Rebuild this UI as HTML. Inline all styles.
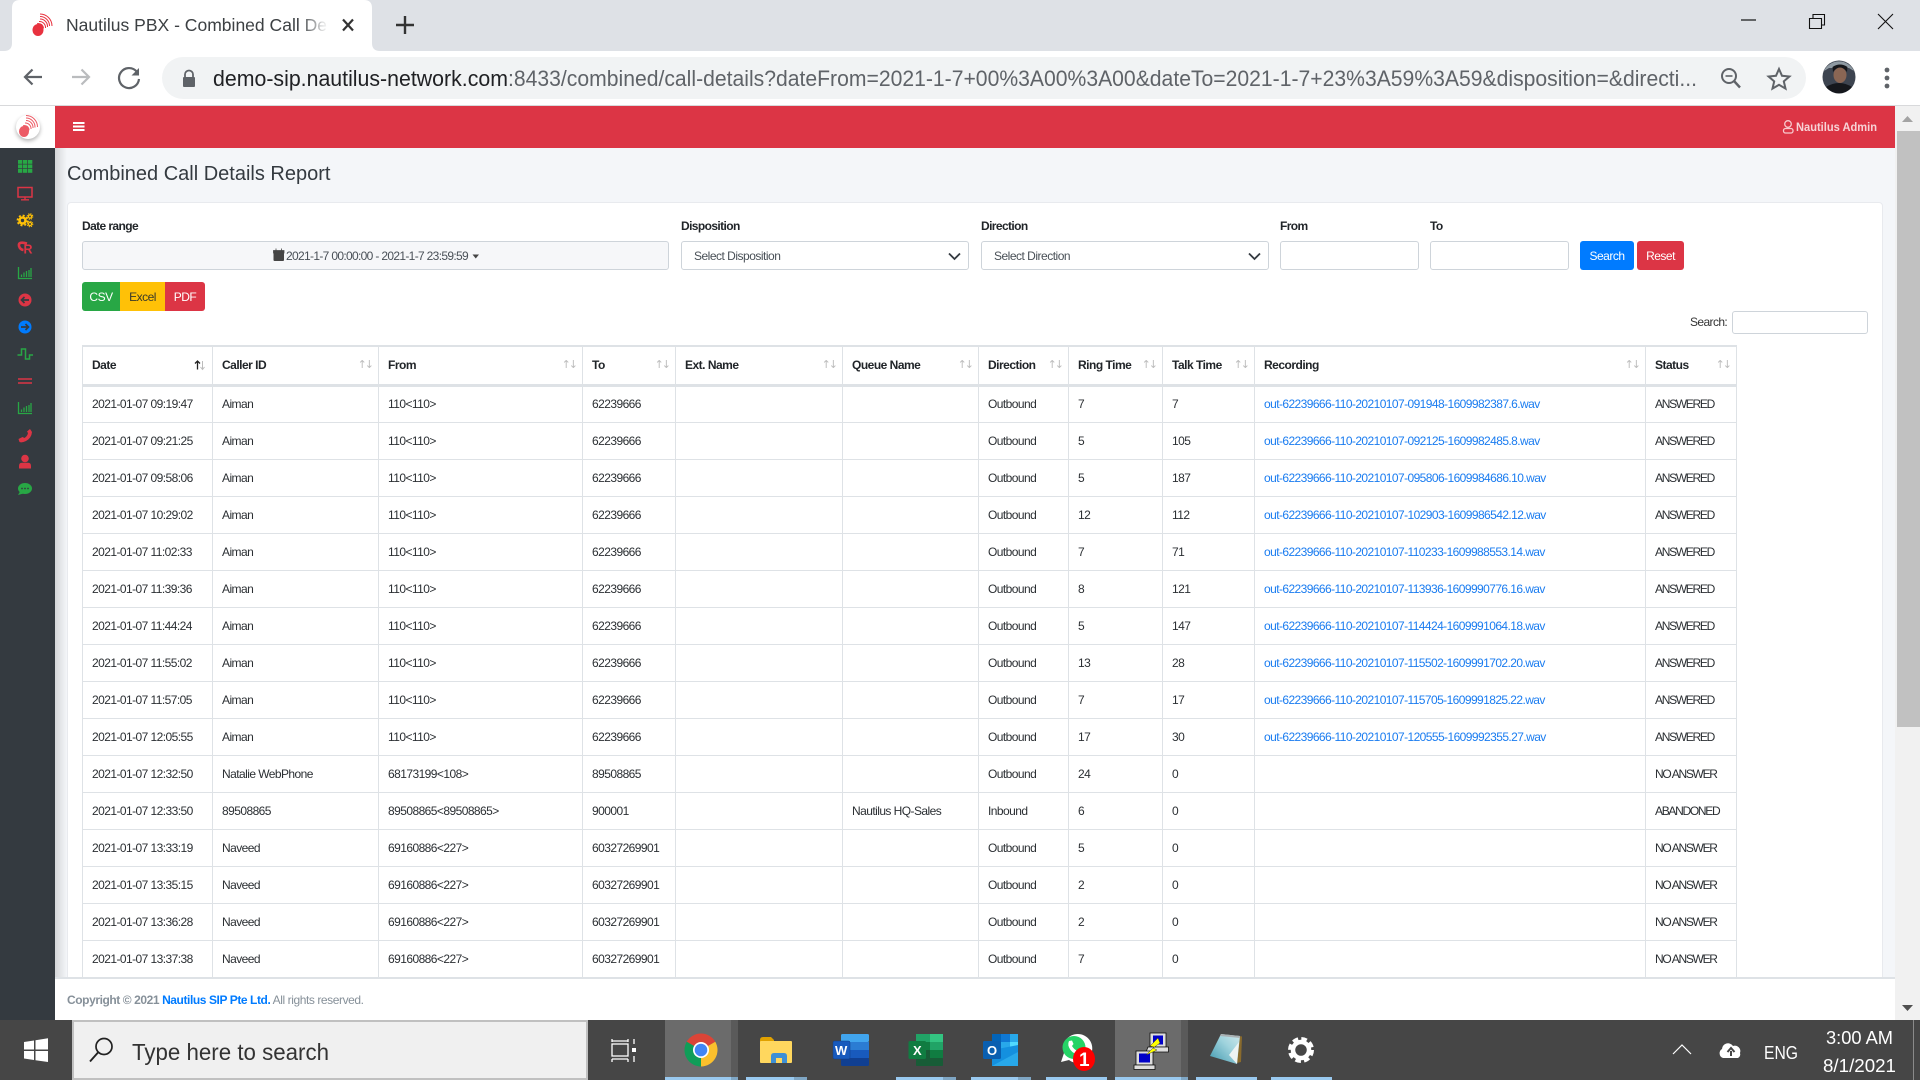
<!DOCTYPE html>
<html>
<head>
<meta charset="utf-8">
<title>Nautilus PBX - Combined Call Details Report</title>
<style>
html,body{margin:0;padding:0;width:1920px;height:1080px;overflow:hidden;background:#f4f6f9}
body{font-family:"Liberation Sans",sans-serif;color:#212529;font-size:12px;position:relative}
.a{position:absolute;box-sizing:border-box}
.lb{position:absolute;font-weight:bold;font-size:12px;letter-spacing:-.6px;line-height:16px;top:218px;color:#212529}
.inp{position:absolute;top:241px;height:29px;box-sizing:border-box;background:#fff;border:1px solid #ced4da;border-radius:3px;line-height:29px;font-size:12px;letter-spacing:-.5px;color:#495057;padding-left:12px}
.btn{position:absolute;color:#fff;text-align:center;font-size:12px;letter-spacing:-.5px;box-sizing:border-box}
table{position:absolute;left:82px;top:345px;width:1654px;border-collapse:collapse;table-layout:fixed;font-size:12px;letter-spacing:-.56px}
th,td{border:1px solid #dee2e6;padding:0 0 0 9px;text-align:left;white-space:nowrap;overflow:hidden;box-sizing:border-box}
th{height:39px;font-weight:bold;border-bottom:3px solid #dee2e6;border-top:2px solid #dee2e6;position:relative;letter-spacing:-.5px}
td{height:37px;color:#2b2f33}
td:last-child{letter-spacing:-1.3px}
th:after{content:"↑↓";position:absolute;right:6px;top:11px;color:#bcbcbc;font-size:11px;font-weight:normal;letter-spacing:-2px;font-family:"DejaVu Sans",sans-serif}
th.s:after{content:none}
td a{color:#1a7cf0;text-decoration:none;letter-spacing:-.58px}
svg text{font-family:"Liberation Sans",sans-serif}
</style>
</head>
<body>

<!-- content -->
<div class="a" style="left:67px;top:161px;font-size:20px;line-height:26px;color:#343a40;">Combined Call Details Report</div>
<div class="a" style="left:67px;top:202px;width:1816px;height:830px;background:#fff;border:1px solid #e8eaee;border-radius:4px"></div>

<div class="lb" style="left:82px">Date range</div>
<div class="lb" style="left:681px">Disposition</div>
<div class="lb" style="left:981px">Direction</div>
<div class="lb" style="left:1280px">From</div>
<div class="lb" style="left:1430px">To</div>

<div class="inp" style="left:82px;width:587px;background:#f6f7f9;padding:0;text-align:left"><span style="position:absolute;left:203px;white-space:nowrap;letter-spacing:-.67px">2021-1-7 00:00:00 - 2021-1-7 23:59:59</span></div>
<div class="inp" style="left:681px;width:288px">Select Disposition</div>
<div class="inp" style="left:981px;width:288px">Select Direction</div>
<div class="inp" style="left:1280px;width:139px"></div>
<div class="inp" style="left:1430px;width:139px"></div>

<div class="btn" style="left:1580px;top:241px;width:54px;height:29px;line-height:30px;background:#007bff;border-radius:3px">Search</div>
<div class="btn" style="left:1637px;top:241px;width:47px;height:29px;line-height:30px;background:#dc3545;border-radius:3px">Reset</div>

<div class="btn" style="left:82px;top:282px;width:38px;height:29px;line-height:30px;background:#28a745;border-radius:3px 0 0 3px">CSV</div>
<div class="btn" style="left:120px;top:282px;width:45px;height:29px;line-height:30px;background:#ffc107;color:#3a3a2a">Excel</div>
<div class="btn" style="left:165px;top:282px;width:40px;height:29px;line-height:30px;background:#dc3545;border-radius:0 3px 3px 0">PDF</div>

<div class="a" style="left:1690px;top:314px;font-size:12px;letter-spacing:-.6px;line-height:16px;color:#333">Search:</div>
<div class="inp" style="left:1732px;top:311px;width:136px;height:23px"></div>

<table>
<colgroup><col style="width:130px"><col style="width:166px"><col style="width:204px"><col style="width:93px"><col style="width:167px"><col style="width:136px"><col style="width:90px"><col style="width:94px"><col style="width:92px"><col style="width:391px"><col style="width:91px"></colgroup>
<thead><tr><th class="s">Date</th><th>Caller ID</th><th>From</th><th>To</th><th>Ext. Name</th><th>Queue Name</th><th>Direction</th><th>Ring Time</th><th>Talk Time</th><th>Recording</th><th>Status</th></tr></thead>
<tbody>
<tr><td>2021-01-07 09:19:47</td><td>Aiman</td><td>110&lt;110&gt;</td><td>62239666</td><td></td><td></td><td>Outbound</td><td>7</td><td>7</td><td><a>out-62239666-110-20210107-091948-1609982387.6.wav</a></td><td>ANSWERED</td></tr>
<tr><td>2021-01-07 09:21:25</td><td>Aiman</td><td>110&lt;110&gt;</td><td>62239666</td><td></td><td></td><td>Outbound</td><td>5</td><td>105</td><td><a>out-62239666-110-20210107-092125-1609982485.8.wav</a></td><td>ANSWERED</td></tr>
<tr><td>2021-01-07 09:58:06</td><td>Aiman</td><td>110&lt;110&gt;</td><td>62239666</td><td></td><td></td><td>Outbound</td><td>5</td><td>187</td><td><a>out-62239666-110-20210107-095806-1609984686.10.wav</a></td><td>ANSWERED</td></tr>
<tr><td>2021-01-07 10:29:02</td><td>Aiman</td><td>110&lt;110&gt;</td><td>62239666</td><td></td><td></td><td>Outbound</td><td>12</td><td>112</td><td><a>out-62239666-110-20210107-102903-1609986542.12.wav</a></td><td>ANSWERED</td></tr>
<tr><td>2021-01-07 11:02:33</td><td>Aiman</td><td>110&lt;110&gt;</td><td>62239666</td><td></td><td></td><td>Outbound</td><td>7</td><td>71</td><td><a>out-62239666-110-20210107-110233-1609988553.14.wav</a></td><td>ANSWERED</td></tr>
<tr><td>2021-01-07 11:39:36</td><td>Aiman</td><td>110&lt;110&gt;</td><td>62239666</td><td></td><td></td><td>Outbound</td><td>8</td><td>121</td><td><a>out-62239666-110-20210107-113936-1609990776.16.wav</a></td><td>ANSWERED</td></tr>
<tr><td>2021-01-07 11:44:24</td><td>Aiman</td><td>110&lt;110&gt;</td><td>62239666</td><td></td><td></td><td>Outbound</td><td>5</td><td>147</td><td><a>out-62239666-110-20210107-114424-1609991064.18.wav</a></td><td>ANSWERED</td></tr>
<tr><td>2021-01-07 11:55:02</td><td>Aiman</td><td>110&lt;110&gt;</td><td>62239666</td><td></td><td></td><td>Outbound</td><td>13</td><td>28</td><td><a>out-62239666-110-20210107-115502-1609991702.20.wav</a></td><td>ANSWERED</td></tr>
<tr><td>2021-01-07 11:57:05</td><td>Aiman</td><td>110&lt;110&gt;</td><td>62239666</td><td></td><td></td><td>Outbound</td><td>7</td><td>17</td><td><a>out-62239666-110-20210107-115705-1609991825.22.wav</a></td><td>ANSWERED</td></tr>
<tr><td>2021-01-07 12:05:55</td><td>Aiman</td><td>110&lt;110&gt;</td><td>62239666</td><td></td><td></td><td>Outbound</td><td>17</td><td>30</td><td><a>out-62239666-110-20210107-120555-1609992355.27.wav</a></td><td>ANSWERED</td></tr>
<tr><td>2021-01-07 12:32:50</td><td>Natalie WebPhone</td><td>68173199&lt;108&gt;</td><td>89508865</td><td></td><td></td><td>Outbound</td><td>24</td><td>0</td><td></td><td>NO ANSWER</td></tr>
<tr><td>2021-01-07 12:33:50</td><td>89508865</td><td>89508865&lt;89508865&gt;</td><td>900001</td><td></td><td>Nautilus HQ-Sales</td><td>Inbound</td><td>6</td><td>0</td><td></td><td>ABANDONED</td></tr>
<tr><td>2021-01-07 13:33:19</td><td>Naveed</td><td>69160886&lt;227&gt;</td><td>60327269901</td><td></td><td></td><td>Outbound</td><td>5</td><td>0</td><td></td><td>NO ANSWER</td></tr>
<tr><td>2021-01-07 13:35:15</td><td>Naveed</td><td>69160886&lt;227&gt;</td><td>60327269901</td><td></td><td></td><td>Outbound</td><td>2</td><td>0</td><td></td><td>NO ANSWER</td></tr>
<tr><td>2021-01-07 13:36:28</td><td>Naveed</td><td>69160886&lt;227&gt;</td><td>60327269901</td><td></td><td></td><td>Outbound</td><td>2</td><td>0</td><td></td><td>NO ANSWER</td></tr>
<tr><td>2021-01-07 13:37:38</td><td>Naveed</td><td>69160886&lt;227&gt;</td><td>60327269901</td><td></td><td></td><td>Outbound</td><td>7</td><td>0</td><td></td><td>NO ANSWER</td></tr>
</tbody>
</table>

<!-- footer -->
<div class="a" style="left:55px;top:977px;width:1840px;height:43px;background:#fff;border-top:2px solid #dee2e6"></div>
<div class="a" style="left:67px;top:992px;font-size:12px;line-height:16px;letter-spacing:-.42px;color:#869099;white-space:nowrap"><b>Copyright © 2021 <span style="color:#007bff">Nautilus SIP Pte Ltd.</span></b> All rights reserved.</div>

<!-- overlay -->
<svg class="a" style="left:0;top:0" width="1920" height="1080" viewBox="0 0 1920 1080" xmlns="http://www.w3.org/2000/svg">
<defs>
<linearGradient id="fade" x1="0" x2="1"><stop offset="0" stop-color="#fff" stop-opacity="0"/><stop offset="1" stop-color="#fff"/></linearGradient>
<linearGradient id="shd" x1="0" x2="1"><stop offset="0" stop-color="#000" stop-opacity=".13"/><stop offset="1" stop-color="#000" stop-opacity="0"/></linearGradient>
<linearGradient id="note" x1="0" y1="1" x2="1" y2="0"><stop offset="0" stop-color="#3f97ad"/><stop offset=".6" stop-color="#9fd3dd"/><stop offset="1" stop-color="#cfe8ec"/></linearGradient>
<filter id="bl" x="-50%" y="-50%" width="200%" height="200%"><feGaussianBlur stdDeviation="2"/></filter>
</defs>

<!-- browser chrome -->
<rect x="0" y="0" width="1920" height="51" fill="#dee1e6"/>
<path d="M0 51 H4 Q12 51 12 43 V8 Q12 0 20 0 H364 Q372 0 372 8 V43 Q372 51 380 51 H0Z" fill="#fff"/>
<rect x="0" y="51" width="1920" height="54" fill="#fff"/>
<rect x="0" y="105" width="1920" height="1" fill="#d8d9db"/>
<!-- favicon -->
<g>
<ellipse cx="38" cy="30" rx="5.500" ry="6" fill="#e8323f"/>
<path d="M37 23 Q43 22.500 44 28 L40 32Z" fill="#e8323f"/>
<g fill="none" stroke="#e8323f" stroke-width="1"><path d="M40 14 A12 12 0 0 1 52 26"/><path d="M40 16.500 A9.500 9.500 0 0 1 49.500 26"/><path d="M40 19 A7.500 7.500 0 0 1 47.500 27"/><path d="M39 21.500 A6 6 0 0 1 45.500 28"/></g>
</g>
<text x="66" y="31" font-size="17.6" fill="#3c4043" textLength="261" lengthAdjust="spacingAndGlyphs">Nautilus PBX - Combined Call De</text>
<rect x="300" y="8" width="28" height="34" fill="url(#fade)"/>
<path d="M343 19.500 L353 30.500 M353 19.500 L343 30.500" stroke="#333" stroke-width="2.200" fill="none"/>
<path d="M405 16 V34 M396 25 H414" stroke="#333" stroke-width="2.400" fill="none"/>
<!-- window controls -->
<path d="M1741 20 H1756" stroke="#111" stroke-width="1.200"/>
<path d="M1809.500 18.500 H1821.500 V28.500 H1809.500Z M1813 18 V14.500 H1824.500 V25 H1822" fill="none" stroke="#111" stroke-width="1.100"/>
<path d="M1878 14 L1893 29 M1893 14 L1878 29" stroke="#111" stroke-width="1.100"/>
<!-- nav -->
<path d="M42 77 H25 M32.500 69.500 L25 77 L32.500 84.500" fill="none" stroke="#5f6368" stroke-width="2.200"/>
<path d="M72 77 H89 M81.500 69.500 L89 77 L81.500 84.500" fill="none" stroke="#babcbe" stroke-width="2.200"/>
<path d="M137 72 A10 10 0 1 0 139 79" fill="none" stroke="#5f6368" stroke-width="2.200"/>
<path d="M139 68 V75.500 H131.500Z" fill="#5f6368"/>
<rect x="162" y="57" width="1644" height="42" rx="21" fill="#f1f3f4"/>
<path d="M185 77 V74.500 A4 4 0 0 1 193 74.500 V77" fill="none" stroke="#5f6368" stroke-width="1.800"/>
<rect x="183" y="77" width="12" height="10" rx="1" fill="#5f6368"/>
<text x="213" y="86" font-size="22" fill="#202124" textLength="295" lengthAdjust="spacingAndGlyphs">demo-sip.nautilus-network.com</text>
<text x="508" y="86" font-size="22" fill="#5f6368" textLength="1189" lengthAdjust="spacingAndGlyphs">:8433/combined/call-details?dateFrom=2021-1-7+00%3A00%3A00&amp;dateTo=2021-1-7+23%3A59%3A59&amp;disposition=&amp;directi...</text>
<circle cx="1729" cy="76" r="7" fill="none" stroke="#5f6368" stroke-width="2"/>
<path d="M1734 81 L1740 87.500" stroke="#5f6368" stroke-width="2.400"/><path d="M1725.500 76 H1732.500" stroke="#5f6368" stroke-width="1.600"/>
<path d="M1779 69 L1782 75.800 L1789.400 76.500 L1783.800 81.400 L1785.500 88.600 L1779 84.800 L1772.500 88.600 L1774.200 81.400 L1768.600 76.500 L1776 75.800Z" fill="none" stroke="#5f6368" stroke-width="2"/>
<!-- avatar -->
<circle cx="1839" cy="77" r="16.500" fill="#3d4450"/>
<path d="M1824 71 A16.500 16.500 0 0 1 1854 71 L1849 68 H1829Z" fill="#8f9aa2"/>
<ellipse cx="1840" cy="75" rx="6.500" ry="8" fill="#8a6654"/>
<path d="M1833 72 Q1840 63 1847 72 L1847.500 67 Q1840 62 1832.500 67Z" fill="#15161a"/>
<path d="M1826 87 Q1839 79 1852 87 A16.500 16.500 0 0 1 1826 87Z" fill="#15171c"/>
<circle cx="1887" cy="70" r="2.400" fill="#5f6368"/><circle cx="1887" cy="78" r="2.400" fill="#5f6368"/><circle cx="1887" cy="86" r="2.400" fill="#5f6368"/>

<!-- navbar -->
<rect x="55" y="106" width="1840" height="42" fill="#dc3545"/>
<rect x="0" y="106" width="55" height="42" fill="#fff"/>
<circle cx="28" cy="129" r="12" fill="#000" opacity=".3" filter="url(#bl)"/>
<circle cx="28" cy="127" r="12" fill="#fff"/>
<g opacity=".8">
<ellipse cx="24" cy="131.500" rx="5" ry="5.500" fill="#e8323f"/>
<path d="M23 125 Q29 124.500 29.500 130 L26 134Z" fill="#e8323f"/>
<g fill="none" stroke="#e8323f" stroke-width="1"><path d="M26 115.500 A11.500 11.500 0 0 1 37.500 127"/><path d="M26 118 A9 9 0 0 1 35 127.500"/><path d="M26 120.500 A7 7 0 0 1 33 128"/><path d="M25 123 A5.500 5.500 0 0 1 31 129"/></g>
</g>
<path d="M73 123 H84.500 M73 126.500 H84.500 M73 130 H84.500" stroke="#fff" stroke-width="2"/>
<g fill="none" stroke="#f7c9cd" stroke-width="1.300"><circle cx="1788" cy="124" r="3.300"/><rect x="1783.500" y="128.500" width="9.500" height="4.500" rx="2"/></g>
<text x="1796" y="131" font-size="12" font-weight="bold" fill="#f7d3d6" textLength="81" lengthAdjust="spacingAndGlyphs">Nautilus Admin</text>

<!-- sidebar -->
<rect x="0" y="148" width="55" height="872" fill="#343a40"/>
<rect x="55" y="148" width="12" height="829" fill="url(#shd)"/>
<!-- grid -->
<g fill="#28a745"><rect x="18" y="160" width="4.300" height="3.800"/><rect x="23" y="160" width="4.300" height="3.800"/><rect x="28" y="160" width="4.300" height="3.800"/><rect x="18" y="164.500" width="4.300" height="3.800"/><rect x="23" y="164.500" width="4.300" height="3.800"/><rect x="28" y="164.500" width="4.300" height="3.800"/><rect x="18" y="169" width="4.300" height="3.800"/><rect x="23" y="169" width="4.300" height="3.800"/><rect x="28" y="169" width="4.300" height="3.800"/></g>
<!-- desktop -->
<path d="M18 187.500 H32 V197 H18Z" fill="none" stroke="#dc3545" stroke-width="1.500"/><path d="M21 199.800 H29 M25 197 V199.800" stroke="#dc3545" stroke-width="1.400"/>
<!-- cogs -->
<g fill="none" stroke="#ffc107"><circle cx="22.500" cy="220.500" r="3" stroke-width="2.600"/><circle cx="22.500" cy="220.500" r="5" stroke-width="1.800" stroke-dasharray="2 1.930"/><circle cx="30" cy="216.500" r="1.600" stroke-width="1.300"/><circle cx="30" cy="216.500" r="2.800" stroke-width="1" stroke-dasharray="1.200 1"/><circle cx="30" cy="224" r="1.600" stroke-width="1.300"/><circle cx="30" cy="224" r="2.800" stroke-width="1" stroke-dasharray="1.200 1"/></g>
<!-- R -->
<path d="M27 243.500 Q18 241 19 246 Q20 249.500 23.500 250" fill="none" stroke="#dc3545" stroke-width="2.600"/>
<text x="23.500" y="253.500" font-size="12.500" font-weight="bold" fill="#dc3545">R</text>
<!-- chart -->
<path d="M18.500 267 V278.500 H32" fill="none" stroke="#28a745" stroke-width="1.300"/><path d="M21.500 274.500 V277 M24 272.500 V277 M26.500 271 V277 M29 270 V277 M31 268 V277" stroke="#28a745" stroke-width="1.300"/>
<!-- arrow circles -->
<circle cx="25" cy="300" r="6.500" fill="#dc3545"/><path d="M29 300 H21.500 M24.500 297 L21.500 300 L24.500 303" fill="none" stroke="#343a40" stroke-width="1.700"/>
<circle cx="25" cy="327" r="6.500" fill="#007bff"/><path d="M21 327 H28.500 M25.500 324 L28.500 327 L25.500 330" fill="none" stroke="#343a40" stroke-width="1.700"/>
<!-- wave -->
<path d="M17.500 355 H21.500 V349 H25.500 V359 H29.500 V355 H33" fill="none" stroke="#28a745" stroke-width="1.500"/>
<!-- equals -->
<path d="M18 379 H32 M18 383 H32" stroke="#dc3545" stroke-width="1.500"/>
<!-- chart -->
<path d="M18.500 402 V413.500 H32" fill="none" stroke="#28a745" stroke-width="1.300"/><path d="M21.500 409.500 V412 M24 407.500 V412 M26.500 406 V412 M29 405 V412 M31 403 V412" stroke="#28a745" stroke-width="1.300"/>
<!-- phone -->
<path d="M30 429 L32 432 Q31.500 438 26 441 Q22 443 19.500 442 L18.500 439 L22.500 437 L24.500 438 Q27.500 436 28 433 L27 431.500Z" fill="#dc3545"/>
<!-- user -->
<circle cx="25" cy="458.500" r="3.800" fill="#dc3545"/><path d="M19 468.500 V466 Q19 462.800 22 462.800 H28 Q31 462.800 31 466 V468.500Z" fill="#dc3545"/>
<!-- comment -->
<ellipse cx="25" cy="488.500" rx="7" ry="5.500" fill="#28a745"/><path d="M20 491.500 L18 495 L23.500 493.500Z" fill="#28a745"/>
<g fill="#343a40"><circle cx="22" cy="488.500" r=".9"/><circle cx="25" cy="488.500" r=".9"/><circle cx="28" cy="488.500" r=".9"/></g>

<!-- form icons -->
<rect x="273.500" y="251" width="10.500" height="10" rx="1" fill="#454545"/><path d="M273.500 250.500 H284 V253 H273.500Z M276 248.500 V251 M281.500 248.500 V251" fill="#454545" stroke="#454545" stroke-width=".8"/>
<path d="M472.500 254.500 H479 L475.750 258.500Z" fill="#454545"/>
<path d="M949 253.500 L954.500 259 L960 253.500" fill="none" stroke="#343a40" stroke-width="1.800"/>
<path d="M1249 253.500 L1254.500 259 L1260 253.500" fill="none" stroke="#343a40" stroke-width="1.800"/>
<!-- active sort arrows -->
<path d="M197.500 369.500 V361 M195 363.500 L197.500 361 L200 363.500" fill="none" stroke="#222" stroke-width="1.300"/>
<path d="M202.500 361 V369.500 M200.500 367 L202.500 369.500 L204.500 367" fill="none" stroke="#bcbcbc" stroke-width="1"/>

<!-- scrollbar -->
<rect x="1895" y="106" width="25" height="914" fill="#f1f1f1"/>
<rect x="1897" y="131" width="23" height="596" fill="#c1c1c1"/>
<path d="M1902 122 H1913 L1907.500 116Z" fill="#a3a3a3"/>
<path d="M1902 1005 H1913 L1907.500 1011Z" fill="#505050"/>

<!-- taskbar -->
<rect x="0" y="1020" width="1920" height="60" fill="#464646"/>
<g fill="#fff"><path d="M24 1042 L34 1040.500 V1049.500 H24Z"/><path d="M35.500 1040.200 L48 1038.200 V1049.500 H35.500Z"/><path d="M24 1051 H34 V1060 L24 1058.500Z"/><path d="M35.500 1051 H48 V1062 L35.500 1060.300Z"/></g>
<rect x="72" y="1020" width="516" height="60" fill="#c0c0c0"/>
<rect x="74" y="1022" width="512" height="56" fill="#f0f0f0"/>
<circle cx="104" cy="1046.500" r="8" fill="none" stroke="#222" stroke-width="1.700"/><path d="M98 1052.500 L90 1061.500" stroke="#222" stroke-width="1.900"/>
<text x="132" y="1060" font-size="23.500" fill="#333" textLength="197" lengthAdjust="spacingAndGlyphs">Type here to search</text>

<!-- task view -->
<g fill="none" stroke="#fff" stroke-width="1.300"><rect x="612" y="1044" width="16" height="12"/><path d="M612 1039 V1042 M628 1039 V1042 M612 1041 H628"/><path d="M612 1059 H628 M612 1059 V1062 M628 1059 V1062"/><path d="M634 1039 V1044 M634 1056 V1062"/></g>
<rect x="632" y="1048" width="4" height="4" fill="#fff"/>

<!-- highlighted items -->
<rect x="665" y="1020" width="66" height="60" fill="#6b6b6b"/><rect x="731" y="1020" width="7" height="60" fill="#5a5a5a"/>
<rect x="1115" y="1020" width="66" height="60" fill="#6b6b6b"/><rect x="1181" y="1020" width="7" height="60" fill="#5a5a5a"/>
<g fill="#99c9ef"><rect x="665" y="1077" width="66" height="3"/><rect x="746" y="1077" width="48" height="3"/><rect x="896" y="1077" width="47" height="3"/><rect x="971" y="1077" width="47" height="3"/><rect x="1046" y="1077" width="61" height="3"/><rect x="1115" y="1077" width="66" height="3"/><rect x="1196" y="1077" width="61" height="3"/><rect x="1271" y="1077" width="61" height="3"/></g>
<g fill="#7fa6c4"><rect x="731" y="1077" width="7" height="3"/><rect x="794" y="1077" width="13" height="3"/><rect x="943" y="1077" width="13" height="3"/><rect x="1018" y="1077" width="13" height="3"/><rect x="1181" y="1077" width="7" height="3"/></g>

<!-- chrome icon -->
<g transform="translate(701 1050)">
<path d="M0 0 L-14.300 -8.250 A16.500 16.500 0 0 1 14.300 -8.250Z" fill="#db4437"/>
<path d="M0 0 L14.300 -8.250 A16.500 16.500 0 0 1 0 16.500Z" fill="#fbc02d"/>
<path d="M0 0 L0 16.500 A16.500 16.500 0 0 1 -14.300 -8.250Z" fill="#0f9d58"/>
<circle r="8" fill="#fff"/><circle r="6.300" fill="#4285f4"/>
</g>
<!-- folder -->
<path d="M760 1040 Q760 1037 763 1037 H771 L774 1040 V1044 H760Z" fill="#e0a100"/>
<rect x="760" y="1041" width="32" height="22" rx="1" fill="#ffd75e"/>
<path d="M771 1063 V1056 Q771 1053 774 1053 H784 Q787 1053 787 1056 V1063 H782 V1058 H776 V1063Z" fill="#3d8fd6"/>
<!-- word -->
<rect x="841" y="1034" width="28" height="8" rx="1.500" fill="#41a5ee"/><rect x="841" y="1042" width="28" height="8" fill="#2b7cd3"/><rect x="841" y="1050" width="28" height="8" fill="#185abd"/><rect x="841" y="1058" width="28" height="8" rx="1.500" fill="#103f91"/>
<rect x="833" y="1041" width="17" height="18" rx="1.500" fill="#185abd" stroke="#123f85" stroke-width=".5"/>
<text x="835" y="1055" font-size="13" font-weight="bold" fill="#fff">W</text>
<!-- excel -->
<rect x="916" y="1034" width="14" height="8" fill="#21a366"/><rect x="930" y="1034" width="13" height="8" fill="#33c481"/><rect x="916" y="1042" width="14" height="8" fill="#107c41"/><rect x="930" y="1042" width="13" height="8" fill="#21a366"/><rect x="916" y="1050" width="14" height="8" fill="#185c37"/><rect x="930" y="1050" width="13" height="8" fill="#107c41"/><rect x="916" y="1058" width="27" height="8" rx="1" fill="#185c37"/>
<rect x="908.500" y="1041" width="17.500" height="18" rx="1.500" fill="#107c41"/>
<text x="913" y="1055" font-size="13" font-weight="bold" fill="#fff">X</text>
<!-- outlook -->
<rect x="992" y="1034" width="26" height="16" fill="#0f78d4"/><rect x="992" y="1034" width="9" height="8" fill="#0364b8"/><rect x="1010" y="1034" width="8" height="8" fill="#28a8ea"/><rect x="1001" y="1042" width="9" height="8" fill="#28a8ea"/><rect x="1010" y="1042" width="8" height="8" fill="#50d9ff"/>
<path d="M992 1050 L1018 1045 V1066 H992Z" fill="#1490df"/><path d="M992 1066 L1018 1052 V1066Z" fill="#28a8ea"/>
<rect x="983" y="1041" width="18" height="18" rx="1.500" fill="#0a5fb0"/>
<text x="987" y="1055" font-size="13" font-weight="bold" fill="#fff">O</text>
<!-- whatsapp -->
<g transform="translate(-2 0)">
<path d="M1063 1062 L1066 1053 A14.500 14.500 0 1 1 1071 1060Z" fill="#fff"/>
<circle cx="1076" cy="1047.500" r="11.500" fill="#25d366"/>
<path d="M1071 1041 L1074 1040.500 L1075.500 1044 L1074 1046 Q1076 1049.500 1079.500 1051 L1081.500 1049.500 L1084 1052 L1083 1054 Q1077 1055.500 1072.500 1050 Q1069 1045 1071 1041Z" fill="#fff"/>
</g>
<ellipse cx="1084" cy="1059" rx="11" ry="12" fill="#ff0000"/>
<text x="1079" y="1066" font-size="19" font-weight="bold" fill="#fff">1</text>
<!-- putty -->
<g>
<rect x="1150" y="1033" width="16" height="14" fill="#ddd" stroke="#111" stroke-width=".8"/><rect x="1153" y="1035.500" width="10" height="9" fill="#0000c8"/><path d="M1148 1047 H1168.500 V1052 H1146Z" fill="#ddd" stroke="#111" stroke-width=".8"/>
<rect x="1136" y="1051" width="17" height="14" fill="#ddd" stroke="#111" stroke-width=".8"/><rect x="1139" y="1053.500" width="11" height="9" fill="#0000c8"/><rect x="1134" y="1065" width="21" height="4.500" fill="#ddd" stroke="#111" stroke-width=".8"/>
<path d="M1158 1038 L1150 1046 L1154 1047 L1146 1055 L1157 1050 L1153 1048 L1160 1043Z" fill="#ffff00" stroke="#222" stroke-width=".4"/>
</g>
<!-- notepad -->
<path d="M1239 1036 L1242 1036.500 L1241 1062 L1237 1063Z" fill="#8a6b2d"/>
<path d="M1221 1034 L1240 1036 L1237 1064 L1210 1056Z" fill="url(#note)"/>
<path d="M1229 1055 L1239 1042 L1237 1064Z" fill="#eef3f3"/>
<path d="M1221 1034 L1240 1036 L1240 1038 L1220 1036Z" fill="#aab0b2"/>
<!-- gear -->
<g transform="translate(1301 1050)" fill="none" stroke="#fff"><circle r="8" stroke-width="4.500"/><circle r="11" stroke-width="4" stroke-dasharray="5.500 3.140"/></g>

<!-- tray -->
<path d="M1673 1054 L1682 1045 L1691 1054" fill="none" stroke="#fff" stroke-width="1.200"/>
<path d="M1723 1058 A5 5 0 0 1 1722 1049 A6 6 0 0 1 1733 1046 A5.500 5.500 0 0 1 1740 1053 A4 4 0 0 1 1738 1058Z" fill="#fff"/>
<path d="M1731 1056 V1051 M1727.500 1052 L1731 1048 L1734.500 1052" fill="none" stroke="#464646" stroke-width="2"/>
<text x="1764" y="1059" font-size="18" fill="#fff" textLength="34" lengthAdjust="spacingAndGlyphs">ENG</text>
<text x="1826" y="1044" font-size="18" fill="#fff" textLength="67" lengthAdjust="spacingAndGlyphs">3:00 AM</text>
<text x="1823" y="1072" font-size="18" fill="#fff" textLength="73" lengthAdjust="spacingAndGlyphs">8/1/2021</text>
<rect x="1913" y="1020" width="1" height="60" fill="#8a8a8a"/>
</svg>
</body>
</html>
